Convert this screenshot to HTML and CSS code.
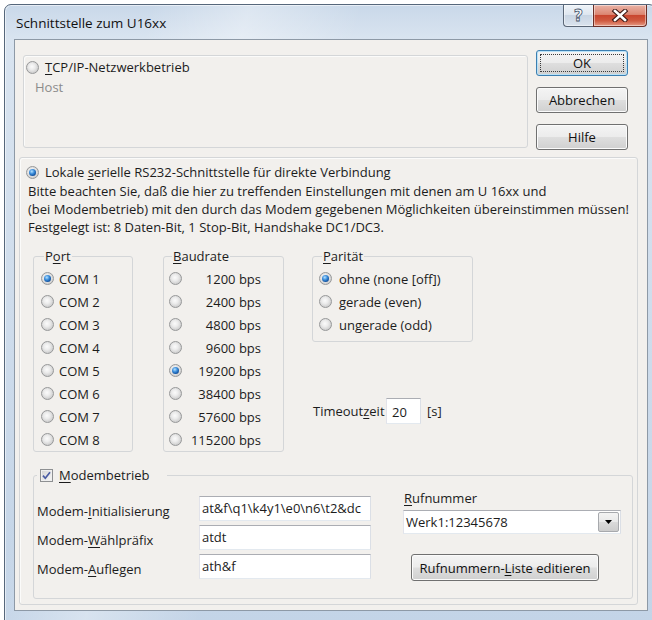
FILE: index.html
```html
<!DOCTYPE html>
<html lang="de">
<head>
<meta charset="utf-8">
<title>Schnittstelle zum U16xx</title>
<link rel="stylesheet" href="styles.css">
</head>
<body>
<div class="window">
  <div class="titlebar">
    <span class="title">Schnittstelle zum U16xx</span>
    <div class="caption-buttons">
      <div class="cap-btn cap-help">?</div>
      <div class="cap-btn cap-close">
        <svg width="18" height="13" viewBox="0 0 18 13">
          <path d="M4 2 L14 11 M14 2 L4 11" stroke="#3a1712" stroke-width="4.6" stroke-linecap="square" fill="none"/>
          <path d="M4 2 L14 11 M14 2 L4 11" stroke="#ffffff" stroke-width="2.6" stroke-linecap="square" fill="none"/>
        </svg>
      </div>
    </div>
  </div>

  <div class="client">
    <div class="top-row">
      <div class="box tcp">
        <div class="opt tcp-opt"><span class="radio"></span><span><u>T</u>CP/IP-Netzwerkbetrieb</span></div>
        <div class="host">Host</div>
      </div>
      <div class="dlg-buttons">
        <div class="btn btn-default"><span class="focus">OK</span></div>
        <div class="btn">Abbrechen</div>
        <div class="btn">Hilfe</div>
      </div>
    </div>

    <div class="box serial">
      <div class="opt serial-opt"><span class="radio on"></span><span>Lokale <u>s</u>erielle RS232-Schnittstelle für direkte Verbindung</span></div>
      <p class="note">Bitte beachten Sie, daß die hier zu treffenden Einstellungen mit denen am U 16xx und<br>(bei Modembetrieb) mit den durch das Modem gegebenen Möglichkeiten übereinstimmen müssen!<br>Festgelegt ist: 8 Daten-Bit, 1 Stop-Bit, Handshake DC1/DC3.</p>

      <div class="settings">
        <fieldset class="group port">
          <legend>P<u>o</u>rt</legend>
          <div class="opt"><span class="radio on"></span>COM 1</div>
          <div class="opt"><span class="radio"></span>COM 2</div>
          <div class="opt"><span class="radio"></span>COM 3</div>
          <div class="opt"><span class="radio"></span>COM 4</div>
          <div class="opt"><span class="radio"></span>COM 5</div>
          <div class="opt"><span class="radio"></span>COM 6</div>
          <div class="opt"><span class="radio"></span>COM 7</div>
          <div class="opt"><span class="radio"></span>COM 8</div>
        </fieldset>

        <fieldset class="group baud">
          <legend><u>B</u>audrate</legend>
          <div class="opt"><span class="radio"></span><span class="rate">1200 bps</span></div>
          <div class="opt"><span class="radio"></span><span class="rate">2400 bps</span></div>
          <div class="opt"><span class="radio"></span><span class="rate">4800 bps</span></div>
          <div class="opt"><span class="radio"></span><span class="rate">9600 bps</span></div>
          <div class="opt"><span class="radio on"></span><span class="rate">19200 bps</span></div>
          <div class="opt"><span class="radio"></span><span class="rate">38400 bps</span></div>
          <div class="opt"><span class="radio"></span><span class="rate">57600 bps</span></div>
          <div class="opt"><span class="radio"></span><span class="rate">115200 bps</span></div>
        </fieldset>

        <div class="side">
          <fieldset class="group parity">
            <legend><u>P</u>arität</legend>
            <div class="opt"><span class="radio on"></span>ohne (none [off])</div>
            <div class="opt"><span class="radio"></span>gerade (even)</div>
            <div class="opt"><span class="radio"></span>ungerade (odd)</div>
          </fieldset>
          <div class="timeout">
            <span class="timeout-label">Timeout<u>z</u>eit</span>
            <div class="edit edit-small">20</div>
            <span class="unit">[s]</span>
          </div>
        </div>
      </div>

      <fieldset class="group modem">
        <legend class="modem-legend">
          <span class="check">
            <svg width="9" height="9" viewBox="0 0 9 9"><path d="M1 4.6 L3.3 7.2 L8 1.2" stroke="#4a5ca3" stroke-width="1.7" fill="none"/></svg>
          </span>
          <span><u>M</u>odembetrieb</span>
        </legend>
        <div class="modem-body">
          <div class="modem-fields">
            <span class="field-label">Modem-<u>I</u>nitialisierung</span>
            <div class="edit">at&amp;f\q1\k4y1\e0\n6\t2&amp;dc</div>
            <span class="field-label">Modem-<u>W</u>ählpräfix</span>
            <div class="edit">atdt</div>
            <span class="field-label">Modem-<u>A</u>uflegen</span>
            <div class="edit">ath&amp;f</div>
          </div>
          <div class="dial">
            <div class="dial-label"><u>R</u>ufnummer</div>
            <div class="combo">
              <span class="combo-value">Werk1:12345678</span>
              <span class="combo-drop">
                <svg width="7" height="4" viewBox="0 0 7 4"><path d="M0 0 H7 L3.5 4 Z" fill="#000"/></svg>
              </span>
            </div>
            <div class="btn dial-edit">Rufnummern-<u>L</u>iste editieren</div>
          </div>
        </div>
      </fieldset>
    </div>
  </div>
</div>
</body>
</html>
```

FILE: styles.css
```css
* { box-sizing: border-box; }

html, body { margin: 0; padding: 0; }

body {
  width: 652px;
  height: 620px;
  overflow: hidden;
  background: #ffffff;
  font-family: "Open Sans", "Noto Sans", "Liberation Sans", sans-serif;
  font-size: 13px;
  color: #1c1c1c;
}

u {
  text-decoration: underline;
  text-decoration-thickness: 1px;
  text-underline-offset: 2px;
}

/* ---- window frame ---- */
.window {
  margin: 4px 0 0 4px;
  width: 652px;
  height: 620px;
  border: 1px solid #56677b;
  border-radius: 7px 7px 0 0;
  padding: 0 7px 0 9px;
  display: flex;
  flex-direction: column;
  background:
    linear-gradient(105deg, rgba(255,255,255,0) 18%, rgba(255,255,255,.35) 30%, rgba(255,255,255,0) 44%),
    linear-gradient(180deg, #c9d8e9 0, #d9e4f0 34px, #c3d4e7 100%);
  box-shadow: inset 0 0 0 1px rgba(255,255,255,.55);
}

.titlebar {
  height: 34px;
  display: flex;
  justify-content: space-between;
  align-items: flex-start;
}

.title {
  padding: 10px 0 0 2px;
  line-height: 16px;
  font-size: 13.5px;
  color: #111;
}

.caption-buttons {
  display: flex;
  margin-right: 1px;
}

.cap-btn {
  height: 22px;
  border: 1px solid #5a6676;
  border-top: none;
  display: flex;
  align-items: center;
  justify-content: center;
  box-shadow: inset 0 0 0 1px rgba(255,255,255,.45);
}

.cap-help {
  width: 30px;
  border-right: none;
  border-radius: 0 0 0 4px;
  background: linear-gradient(#eef3f8 0%, #dfe7f0 45%, #c9d5e3 50%, #dae3ee 100%);
  font-family: "DejaVu Sans", sans-serif;
  font-weight: bold;
  font-size: 16px;
  line-height: 16px;
  color: #f6f8fb;
  -webkit-text-stroke: 0.8px #46546a;
}

.cap-close {
  width: 54px;
  border-color: #6b2e26;
  border-radius: 0 0 4px 0;
  background: linear-gradient(#eab3a6 0%, #dc8672 45%, #c9462f 50%, #cf5a40 75%, #e69a84 100%);
}

/* ---- client area ---- */
.client {
  height: 572px;
  border: 1px solid #8d99a6;
  background: #f2f0ed;
  padding: 10px 0 0 4px;
}

.box {
  border: 1px solid #d4d6d8;
  border-radius: 3px;
  box-shadow: inset 1px 1px 0 #fbfbfa;
}

.top-row {
  display: flex;
  align-items: flex-start;
  margin-left: 4px;
}

.tcp {
  margin-top: 5px;
  width: 505px;
  height: 93px;
  padding: 3px 0 0 2px;
}

.opt {
  display: flex;
  align-items: center;
  height: 23px;
  white-space: nowrap;
}

.tcp-opt { height: 16px; }
.tcp-opt .radio { margin-right: 6px; }

.host {
  margin: 4px 0 0 9px;
  line-height: 16px;
  color: #8b8b8b;
}

.dlg-buttons {
  margin-left: 8px;
  display: flex;
  flex-direction: column;
  gap: 11px;
}

.btn {
  width: 92px;
  height: 26px;
  border: 1px solid #707070;
  border-radius: 3px;
  background: linear-gradient(#f4f4f4 0%, #ececec 48%, #dedede 52%, #d0d0d0 100%);
  box-shadow: inset 0 0 0 1px #fbfbfb;
  display: flex;
  align-items: center;
  justify-content: center;
  white-space: nowrap;
  color: #111;
}

.btn-default {
  border-color: #3c7fb1;
  box-shadow: inset 0 0 0 1px #b9e2f8;
  padding: 3px;
}

.focus {
  flex: 1;
  align-self: stretch;
  border: 1px dotted #3a3a3a;
  display: flex;
  align-items: center;
  justify-content: center;
}

/* ---- radio / check ---- */
.radio {
  flex: none;
  width: 13px;
  height: 13px;
  border-radius: 50%;
  border: 1px solid #979899;
  background: radial-gradient(circle at 45% 42%, #fbfbfb 0, #ececec 35%, #cfcfcf 72%, #c2c2c2 100%);
  display: flex;
  align-items: center;
  justify-content: center;
}

.radio.on::after {
  content: "";
  width: 7px;
  height: 7px;
  border-radius: 50%;
  background: radial-gradient(circle at 40% 35%, #b5e2ff 0, #3d8fdc 38%, #11519e 72%, #0b3168 100%);
}

.check {
  flex: none;
  width: 13px;
  height: 13px;
  border: 1px solid #8e9092;
  background: linear-gradient(135deg, #d3d3d3, #f8f8f8);
  box-shadow: inset 0 0 0 1px #efefef;
  display: flex;
  align-items: center;
  justify-content: center;
  margin-right: 6px;
}

/* ---- serial section ---- */
.serial {
  margin-top: 7px;
  width: 619px;
  padding: 6px 0 5px 0;
}

.serial-opt {
  height: 16px;
  padding-left: 6px;
}
.serial-opt .radio { margin-right: 6px; }

.note {
  margin: 2px 0 0 8px;
  line-height: 18px;
}

.settings {
  display: flex;
  align-items: flex-start;
  margin: 12px 0 0 13px;
}

.group {
  margin: 0;
  min-width: 0;
  border: 1px solid #d4d6d8;
  border-radius: 3px;
  padding: 0;
}

.group legend {
  margin-left: 3px;
  padding: 0 1px;
  line-height: 16px;
}

.port {
  width: 100px;
  padding: 3px 0 0 7px;
}
.port .radio { margin-right: 5px; }

.baud {
  margin-left: 30px;
  width: 121px;
  padding: 3px 0 0 5px;
}

.rate {
  width: 75px;
  margin-left: 4px;
  text-align: right;
}

.side {
  margin-left: 28px;
  display: flex;
  flex-direction: column;
}

.parity {
  width: 161px;
  padding: 3px 0 5px 6px;
}
.parity .radio { margin-right: 7px; }

.timeout {
  display: flex;
  align-items: center;
  margin: 56px 0 0 1px;
}

.timeout-label { width: 73px; }

.unit { margin-left: 6px; }

.edit {
  height: 25px;
  border: 1px solid;
  border-color: #abadb3 #dbdfe6 #e3e9ef #e2e3ea;
  background: #ffffff;
  padding: 0 2px;
  line-height: 23px;
  white-space: nowrap;
  overflow: hidden;
}

.edit-small {
  width: 35px;
  height: 26px;
  padding-left: 5px;
  line-height: 26px;
}

/* ---- modem ---- */
.modem {
  margin: 15px 0 0 13px;
  width: 600px;
}

.modem-legend {
  display: flex;
  align-items: center;
  width: 130px;
  height: 16px;
  padding: 0 0 0 3px !important;
}

.modem-body {
  display: flex;
  align-items: flex-start;
  padding: 13px 0 17px 3px;
}

.modem-fields {
  display: grid;
  grid-template-columns: 162px 172px;
  grid-auto-rows: 25px;
  row-gap: 4px;
}

.field-label {
  padding-top: 7px;
  line-height: 16px;
  white-space: nowrap;
}

.dial {
  margin: -6px 0 0 32px;
  width: 218px;
}

.dial-label {
  padding-left: 1px;
  line-height: 16px;
}

.combo {
  margin-top: 4px;
  height: 24px;
  display: flex;
  border: 1px solid;
  border-color: #abadb3 #dbdfe6 #e3e9ef #e2e3ea;
  background: #ffffff;
}

.combo-value {
  flex: 1;
  padding-left: 2px;
  line-height: 22px;
}

.combo-drop {
  width: 21px;
  margin: 1px;
  border: 1px solid #a7a9ad;
  border-radius: 2px;
  background: linear-gradient(#f3f3f3 0%, #e9e9e9 48%, #dadada 52%, #cdcdcd 100%);
  display: flex;
  align-items: center;
  justify-content: center;
}

.dial-edit {
  margin: 20px 0 0 8px;
  width: 188px;
  height: 27px;
}
```
